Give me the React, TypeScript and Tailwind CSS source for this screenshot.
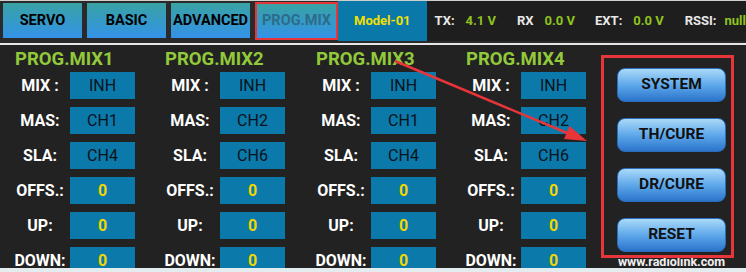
import React from "react";

type Mix = { title: string; mas: string; sla: string };

const mixes: Mix[] = [
  { title: "PROG.MIX1", mas: "CH1", sla: "CH4" },
  { title: "PROG.MIX2", mas: "CH2", sla: "CH6" },
  { title: "PROG.MIX3", mas: "CH1", sla: "CH4" },
  { title: "PROG.MIX4", mas: "CH2", sla: "CH6" },
];

const colWidths = ["w-[150px]", "w-[151px]", "w-[150px]", "w-[151px]"];

function Tab({ label }: { label: string }) {
  return (
    <div className="flex h-[35px] w-[79px] items-center justify-center bg-linear-to-b from-[#3aa1a3] to-[#3592e8] text-[14.5px] font-bold text-black">
      {label}
    </div>
  );
}

function Row({ label, value, num }: { label: string; value: string; num?: boolean }) {
  return (
    <div className="flex h-[27px] items-center">
      <div className="w-[60px] whitespace-nowrap text-center text-[16px] font-bold text-white">{label}</div>
      <div
        className={
          num
            ? "flex h-[27px] w-[65px] items-center justify-center bg-[#0b79a9] text-[16px] font-bold text-[#f2d600]"
            : "flex h-[27px] w-[65px] items-center justify-center bg-[#0b79a9] text-[16px] text-[#08131b]"
        }
      >
        {value}
      </div>
    </div>
  );
}

function MixColumn({ mix, width }: { mix: Mix; width: string }) {
  return (
    <div className={`${width} shrink-0`}>
      <div className="flex h-[27px] items-center pl-[5px] pt-[3px] text-[18.5px] font-bold text-[#92c93b]">
        {mix.title}
      </div>
      <div className="flex flex-col gap-[8px]">
        <Row label="MIX :" value="INH" />
        <Row label="MAS:" value={mix.mas} />
        <Row label="SLA:" value={mix.sla} />
        <Row label="OFFS.:" value="0" num />
        <Row label="UP:" value="0" num />
        <Row label="DOWN:" value="0" num />
      </div>
    </div>
  );
}

function SideButton({ label }: { label: string }) {
  return (
    <div className="flex h-[34px] w-[109px] items-center justify-center rounded-[8px] border border-[#2b6cbc] bg-linear-to-b from-[#aad9f8] via-[#5ea8ea] to-[#2b74cc] text-[15.5px] font-bold text-[#111]">
      {label}
    </div>
  );
}

export default function App() {
  return (
    <div
      className="relative h-[272px] w-[746px] overflow-hidden bg-[#222]"
      style={{ fontFamily: "Roboto, 'Liberation Sans', sans-serif" }}
    >
      {/* top bar */}
      <div className="flex h-[43px] border-t border-[#cfcfcf] bg-[#2a2a2a]">
        <div className="flex gap-[5px] pl-[3px] pt-[2px]">
          <Tab label="SERVO" />
          <Tab label="BASIC" />
          <Tab label="ADVANCED" />
          <div className="-mt-[1px] h-[38px] w-[83px] border-2 border-[#e8353a]">
            <div className="flex h-full w-full items-center justify-center bg-linear-to-b from-[#3aa1a3] to-[#3592e8] text-[14.5px] font-bold text-[#2d6b8a]">
              PROG.MIX
            </div>
          </div>
        </div>
        <div className="flex h-[40px] w-[95px] items-center justify-center bg-[#0a78a8] text-[13px] font-bold text-[#f3e000]">
          Model-01
        </div>
        <div className="flex h-[40px] flex-1 items-center whitespace-nowrap bg-[#1e1e1e] pl-[8px] text-[13px] font-bold">
          <span className="text-[#e8e8e8]">TX:</span>
          <span className="ml-[11px] text-[#8fc31f]">4.1 V</span>
          <span className="ml-[21px] text-[#e8e8e8]">RX</span>
          <span className="ml-[11px] text-[#8fc31f]">0.0 V</span>
          <span className="ml-[20px] text-[#e8e8e8]">EXT:</span>
          <span className="ml-[11px] text-[#8fc31f]">0.0 V</span>
          <span className="ml-[21px] text-[#e8e8e8]">RSSI:</span>
          <span className="ml-[8px] text-[#8fc31f]">null</span>
        </div>
      </div>
      <div className="h-[2px] bg-[#e6e6e6]" />

      {/* main */}
      <div className="flex h-[223px] overflow-hidden pl-[10px]">
        {mixes.map((m, i) => (
          <MixColumn key={m.title} mix={m} width={colWidths[i]} />
        ))}
        <div className="flex flex-col pl-[5px] pt-[23px]">
          <div className="flex flex-col gap-[16px]">
            <SideButton label="SYSTEM" />
            <SideButton label="TH/CURE" />
            <SideButton label="DR/CURE" />
            <SideButton label="RESET" />
          </div>
          <div className="mt-[4px] w-[109px] whitespace-nowrap text-center text-[12.5px] font-bold leading-[12px] text-[#f0f0f0]">
            www.radiolink.com
          </div>
        </div>
      </div>
      <div className="h-[4px] bg-[#e3ecee]" />

      {/* annotations */}
      <div className="absolute left-[601px] top-[55px] h-[203px] w-[133px] border-[3px] border-[#e8353a]" />
      <svg className="absolute left-0 top-0" width="746" height="272">
        <line x1="395" y1="61" x2="572" y2="135" stroke="#e8353a" strokeWidth="2.5" />
        <polygon points="587,141 564,139 569.5,126" fill="#e8353a" />
      </svg>
    </div>
  );
}
